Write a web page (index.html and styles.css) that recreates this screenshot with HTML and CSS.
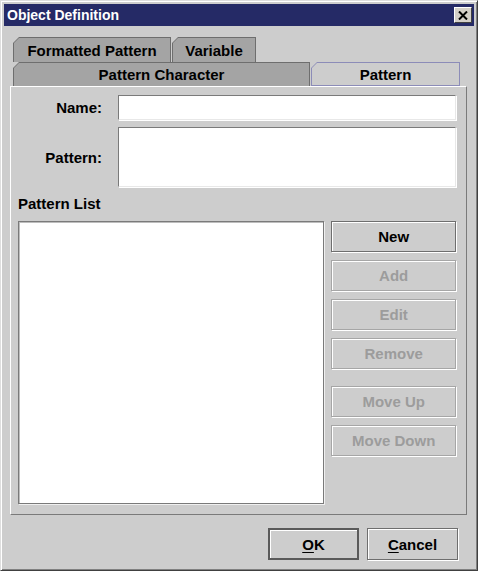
FILE: index.html
```html
<!DOCTYPE html>
<html lang="en">
<head>
  <meta charset="UTF-8">
  <title>Object Definition</title>
  <link rel="stylesheet" href="styles.css">
</head>
<body>
  <div class="window">
    <div class="titlebar">
      <span class="title">Object Definition</span>
      <span class="close">
        <svg width="10" height="9" viewBox="0 0 10 9"><path d="M1 0.5 L9 8.5 M9 0.5 L1 8.5" stroke="#000" stroke-width="2" fill="none"/></svg>
      </span>
    </div>

    <div class="tabs">
      <div class="tabrow">
        <div class="tab formatted"><span>Formatted Pattern</span></div>
        <div class="tab variable"><span>Variable</span></div>
      </div>
      <div class="tabrow">
        <div class="tab character"><span>Pattern Character</span></div>
        <div class="tab selected"><span>Pattern</span></div>
      </div>
    </div>

    <div class="panel">
      <div class="fields">
        <label class="name-label">Name:</label>
        <div class="textfield"></div>
        <label class="pattern-label">Pattern:</label>
        <div class="textarea"></div>
      </div>
      <div class="listlabel">Pattern List</div>
      <div class="listrow">
        <div class="list"></div>
        <div class="buttons">
          <div class="btn">New</div>
          <div class="btn disabled">Add</div>
          <div class="btn disabled">Edit</div>
          <div class="btn disabled">Remove</div>
          <div class="btn disabled moveup">Move Up</div>
          <div class="btn disabled">Move Down</div>
        </div>
      </div>
    </div>

    <div class="footer">
      <div class="btn dialogbtn default"><u>O</u>K</div>
      <div class="btn dialogbtn"><u>C</u>ancel</div>
    </div>
  </div>
</body>
</html>
```

FILE: styles.css
```css
body{
  margin: 0;
  background-color: #cdcdcd;
  font-family: 'Liberation Sans', Arial, sans-serif;
  font-size: 15px;
  font-weight: bold;
  color: #000000;
}
.window{
  width: 478px;
  height: 571px;
  box-sizing: border-box;
  border: 1px solid;
  border-color: #dedede #404040 #404040 #dedede;
  box-shadow: inset 1px 1px 0 #ffffff, inset -1px -1px 0 #808080;
  padding: 3px;
  background-color: #cdcdcd;
}
.titlebar{
  height: 22px;
  background-color: #252a66;
  display: flex;
  align-items: center;
  justify-content: space-between;
  padding: 0 2px 0 3px;
}
.title{
  color: #ffffff;
  font-size: 14px;
}
.close{
  width: 18px;
  height: 16px;
  box-sizing: border-box;
  background-color: #d4d0c8;
  border: 1px solid;
  border-color: #ffffff #404040 #404040 #ffffff;
  display: flex;
  align-items: center;
  justify-content: center;
}

/* tabs */
.tabs{
  margin-top: 11px;
  padding-left: 9px;
}
.tabrow{
  display: flex;
  gap: 1px;
}
.tab{
  box-sizing: border-box;
  background-color: #6e6e6e;
  padding: 1px 1px 0 1px;
  clip-path: polygon(6px 0, 100% 0, 100% 100%, 0 100%, 0 6px);
}
.tab span{
  display: flex;
  align-items: center;
  justify-content: center;
  height: 100%;
  background-color: #a4a4a4;
  clip-path: polygon(5px 0, 100% 0, 100% 100%, 0 100%, 0 5px);
}
.formatted{
  width: 158px;
  height: 25px;
}
.variable{
  width: 84px;
  height: 25px;
}
.character{
  width: 297px;
  height: 24px;
}
.selected{
  width: 149px;
  height: 24px;
  background-color: #8c8cb8;
  padding: 1px;
}
.selected span{
  background-color: #cdcdcd;
}

/* panel */
.panel{
  margin-left: 6px;
  width: 457px;
  height: 429px;
  box-sizing: border-box;
  border: 1px solid;
  border-color: #ffffff #7a7a7a #7a7a7a #ffffff;
  padding: 8px 10px 10px 7px;
  display: flex;
  flex-direction: column;
}
.fields{
  display: grid;
  grid-template-columns: 84px 1fr;
  column-gap: 16px;
  row-gap: 7px;
}
.fields label{
  text-align: right;
  align-self: center;
}
.textfield, .textarea{
  background-color: #ffffff;
  border: 1px solid;
  border-color: #7a7a7a #e8e8e8 #e8e8e8 #7a7a7a;
  box-shadow: 1px 1px 0 #ffffff;
}
.textfield{
  height: 23px;
}
.textarea{
  height: 58px;
}
.listlabel{
  margin-top: 9px;
  margin-bottom: 9px;
  line-height: 16px;
}
.listrow{
  flex: 1;
  display: flex;
  gap: 7px;
}
.list{
  width: 307px;
  box-sizing: border-box;
  background-color: #ffffff;
  border: 1px solid #7a7a7a;
  box-shadow: inset 1px 1px 0 #bdbdbd, 1px 1px 0 #f0f0f0;
}
.buttons{
  width: 125px;
  display: flex;
  flex-direction: column;
  gap: 8px;
}
.btn{
  height: 31px;
  box-sizing: border-box;
  border: 1px solid #6e6e6e;
  box-shadow: inset 1px 1px 0 #ffffff, 1px 1px 0 #ffffff;
  display: flex;
  align-items: center;
  justify-content: center;
  background-color: #cdcdcd;
}
.btn.disabled{
  color: #9c9c9c;
  border-color: #a6a6a6;
}
.moveup{
  margin-top: 9px;
}

/* bottom buttons */
.footer{
  margin-top: 13px;
  padding-right: 16px;
  display: flex;
  justify-content: flex-end;
  gap: 8px;
}
.dialogbtn{
  width: 91px;
  height: 32px;
}
.dialogbtn.default{
  border: 2px solid #5a5a5a;
  box-shadow: inset 1px 1px 0 #ffffff;
}
.dialogbtn u{
  text-decoration-thickness: 1px;
  text-underline-offset: 2px;
}
```
